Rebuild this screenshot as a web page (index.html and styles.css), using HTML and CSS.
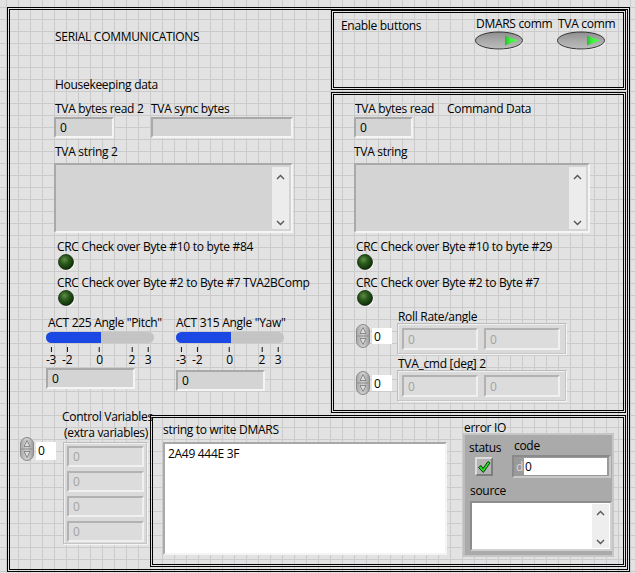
FILE: index.html
```html
<!DOCTYPE html>
<html>
<head>
<meta charset="utf-8">
<title>Serial Communications</title>
<link rel="stylesheet" href="styles.css">
</head>
<body>
<div class="panel">

  <section class="left">
    <div class="lbl title">SERIAL COMMUNICATIONS</div>
    <div class="lbl hk">Housekeeping data</div>
    <div class="row r-bytes">
      <div class="ctl c-bytes">
        <div class="lbl">TVA bytes read 2</div>
        <div class="num w60">0</div>
      </div>
      <div class="ctl">
        <div class="lbl">TVA sync bytes</div>
        <div class="num w142"></div>
      </div>
    </div>
    <div class="lbl gap5">TVA string 2</div>
    <div class="strbox w239">
      <div class="sbar">
        <svg width="9" height="6" viewBox="0 0 9 6"><polyline points="1,5 4.5,1.5 8,5" fill="none" stroke="#555" stroke-width="1.4"/></svg>
        <svg width="9" height="6" viewBox="0 0 9 6"><polyline points="1,1 4.5,4.5 8,1" fill="none" stroke="#555" stroke-width="1.4"/></svg>
      </div>
    </div>
    <div class="lbl crc gap5">CRC Check over Byte #10 to byte #84</div>
    <div class="ledwrap"><svg class="led" width="19" height="18" viewBox="0 0 19 18"><circle cx="10" cy="9" r="7.6" fill="#fff"/><circle cx="9" cy="8" r="7.5" fill="url(#ledg)" stroke="#142a0c" stroke-width="0.8"/></svg></div>
    <div class="lbl crc gap4">CRC Check over Byte #2 to Byte #7 TVA2BComp</div>
    <div class="ledwrap"><svg class="led" width="19" height="18" viewBox="0 0 19 18"><circle cx="10" cy="9" r="7.6" fill="#fff"/><circle cx="9" cy="8" r="7.5" fill="url(#ledg)" stroke="#142a0c" stroke-width="0.8"/></svg></div>

    <div class="row r-sliders">
      <div class="slcol">
        <div class="lbl sllbl">ACT 225 Angle "Pitch"</div>
        <div class="slider"><div class="slfill"></div></div>
        <div class="scale">
          <div class="tick" style="left:0%"><i></i><span>-3</span></div>
          <div class="tick" style="left:16.67%"><i></i><span>-2</span></div>
          <div class="tick" style="left:50%"><i></i><span>0</span></div>
          <div class="tick" style="left:83.33%"><i></i><span>2</span></div>
          <div class="tick" style="left:100%"><i></i><span>3</span></div>
        </div>
        <div class="num w89 slnum">0</div>
      </div>
      <div class="slcol">
        <div class="lbl sllbl yaw">ACT 315 Angle "Yaw"</div>
        <div class="slider"><div class="slfill"></div></div>
        <div class="scale">
          <div class="tick" style="left:0%"><i></i><span>-3</span></div>
          <div class="tick" style="left:16.67%"><i></i><span>-2</span></div>
          <div class="tick" style="left:50%"><i></i><span>0</span></div>
          <div class="tick" style="left:83.33%"><i></i><span>2</span></div>
          <div class="tick" style="left:100%"><i></i><span>3</span></div>
        </div>
        <div class="num w89 slnum yawnum">0</div>
      </div>
    </div>
  </section>

  <section class="box box-enable">
    <div class="lbl en-lbl">Enable buttons</div>
    <div class="btncol">
      <div class="lbl">DMARS comm</div>
      <svg class="okbtn" width="50" height="20" viewBox="0 0 50 20"><ellipse cx="25" cy="10.5" rx="23.5" ry="8.5" fill="#fafafa"/><ellipse cx="24" cy="9.5" rx="23.5" ry="8.5" fill="url(#btng)" stroke="#333"/><polygon points="30,4.5 43,9.5 30,14.5" fill="url(#greeng)"/></svg>
    </div>
    <div class="btncol last">
      <div class="lbl">TVA comm</div>
      <svg class="okbtn" width="50" height="20" viewBox="0 0 50 20"><ellipse cx="25" cy="10.5" rx="23.5" ry="8.5" fill="#fafafa"/><ellipse cx="24" cy="9.5" rx="23.5" ry="8.5" fill="url(#btng)" stroke="#333"/><polygon points="30,4.5 43,9.5 30,14.5" fill="url(#greeng)"/></svg>
    </div>
  </section>

  <section class="box box-cmd">
    <div class="row">
      <div class="ctl c-tva">
        <div class="lbl shift1">TVA bytes read</div>
        <div class="num w59">0</div>
      </div>
      <div class="lbl">Command Data</div>
    </div>
    <div class="lbl gap5">TVA string</div>
    <div class="strbox w236">
      <div class="sbar">
        <svg width="9" height="6" viewBox="0 0 9 6"><polyline points="1,5 4.5,1.5 8,5" fill="none" stroke="#555" stroke-width="1.4"/></svg>
        <svg width="9" height="6" viewBox="0 0 9 6"><polyline points="1,1 4.5,4.5 8,1" fill="none" stroke="#555" stroke-width="1.4"/></svg>
      </div>
    </div>
    <div class="lbl crc gap5">CRC Check over Byte #10 to byte #29</div>
    <div class="ledwrap"><svg class="led" width="19" height="18" viewBox="0 0 19 18"><circle cx="10" cy="9" r="7.6" fill="#fff"/><circle cx="9" cy="8" r="7.5" fill="url(#ledg)" stroke="#142a0c" stroke-width="0.8"/></svg></div>
    <div class="lbl crc gap4">CRC Check over Byte #2 to Byte #7</div>
    <div class="ledwrap"><svg class="led" width="19" height="18" viewBox="0 0 19 18"><circle cx="10" cy="9" r="7.6" fill="#fff"/><circle cx="9" cy="8" r="7.5" fill="url(#ledg)" stroke="#142a0c" stroke-width="0.8"/></svg></div>

    <div class="lbl arrlbl gap2">Roll Rate/angle</div>
    <div class="row arrrow">
      <svg class="spin" width="14" height="24" viewBox="0 0 14 24"><rect x="0.5" y="0.5" width="13" height="23" rx="6.5" fill="url(#spg)" stroke="#8a8a8a"/><line x1="1.5" y1="12" x2="12.5" y2="12" stroke="#8a8a8a"/><polygon points="7,3.5 10,9.5 4,9.5" fill="#dcdcdc" stroke="#777" stroke-width="0.8"/><polygon points="7,20.5 10,14.5 4,14.5" fill="#dcdcdc" stroke="#777" stroke-width="0.8"/></svg>
      <div class="idx">0</div>
      <div class="arr arr-h">
        <div class="cell">0</div>
        <div class="cell">0</div>
      </div>
    </div>
    <div class="lbl arrlbl">TVA_cmd [deg] 2</div>
    <div class="row arrrow">
      <svg class="spin" width="14" height="24" viewBox="0 0 14 24"><rect x="0.5" y="0.5" width="13" height="23" rx="6.5" fill="url(#spg)" stroke="#8a8a8a"/><line x1="1.5" y1="12" x2="12.5" y2="12" stroke="#8a8a8a"/><polygon points="7,3.5 10,9.5 4,9.5" fill="#dcdcdc" stroke="#777" stroke-width="0.8"/><polygon points="7,20.5 10,14.5 4,14.5" fill="#dcdcdc" stroke="#777" stroke-width="0.8"/></svg>
      <div class="idx">0</div>
      <div class="arr arr-h">
        <div class="cell">0</div>
        <div class="cell">0</div>
      </div>
    </div>
  </section>

  <section class="bottom">
    <div class="ctrlvars">
      <div class="cv-lbl">Control Variables<br>(extra variables)</div>
      <div class="row cv-row">
        <svg class="spin" width="14" height="24" viewBox="0 0 14 24"><rect x="0.5" y="0.5" width="13" height="23" rx="6.5" fill="url(#spg)" stroke="#8a8a8a"/><line x1="1.5" y1="12" x2="12.5" y2="12" stroke="#8a8a8a"/><polygon points="7,3.5 10,9.5 4,9.5" fill="#dcdcdc" stroke="#777" stroke-width="0.8"/><polygon points="7,20.5 10,14.5 4,14.5" fill="#dcdcdc" stroke="#777" stroke-width="0.8"/></svg>
        <div class="idx idx-cv">0</div>
        <div class="arr arr-v">
          <div class="cell">0</div>
          <div class="cell">0</div>
          <div class="cell">0</div>
          <div class="cell">0</div>
        </div>
      </div>
    </div>

    <div class="box box-dmars">
      <div class="dm-col">
        <div class="lbl">string to write DMARS</div>
        <div class="whitebox">2A49 444E 3F</div>
      </div>
      <div class="err-col">
        <div class="lbl err-lbl">error IO</div>
        <div class="cluster">
          <div class="row">
            <div class="st-col">
              <div class="lbl">status</div>
              <div class="stbtn"><svg width="14" height="14" viewBox="0 0 14 14"><path d="M1.5 7.5 L4 5.5 L6 8.5 L11 1.5 L13 3 L6.3 12.5 Z" fill="#22e022" stroke="#0b3d0b" stroke-width="1" stroke-linejoin="round"/></svg></div>
            </div>
            <div class="cd-col">
              <div class="lbl cd-lbl">code</div>
              <div class="codefield"><span class="radix">d</span><span class="codeval">0</span></div>
            </div>
          </div>
          <div class="lbl src-lbl">source</div>
          <div class="srcbox">
            <div class="sbar sbar-src">
              <svg width="9" height="6" viewBox="0 0 9 6"><polyline points="1,5 4.5,1.5 8,5" fill="none" stroke="#555" stroke-width="1.4"/></svg>
              <svg width="9" height="6" viewBox="0 0 9 6"><polyline points="1,1 4.5,4.5 8,1" fill="none" stroke="#555" stroke-width="1.4"/></svg>
            </div>
          </div>
        </div>
      </div>
    </div>
  </section>
</div>

<svg class="defs" width="0" height="0" aria-hidden="true">
  <defs>
    <radialGradient id="ledg" cx="40%" cy="35%" r="65%">
      <stop offset="0" stop-color="#5f8d48"/>
      <stop offset="0.45" stop-color="#2b5a1c"/>
      <stop offset="1" stop-color="#0f2e08"/>
    </radialGradient>
    <linearGradient id="btng" x1="0" y1="0" x2="0" y2="1">
      <stop offset="0" stop-color="#8e8e8e"/>
      <stop offset="0.5" stop-color="#a9a9a9"/>
      <stop offset="1" stop-color="#bdbdbd"/>
    </linearGradient>
    <linearGradient id="greeng" x1="0" y1="0" x2="1" y2="0">
      <stop offset="0" stop-color="#2fb82f"/>
      <stop offset="0.4" stop-color="#40f040"/>
      <stop offset="1" stop-color="#52ff52"/>
    </linearGradient>
    <linearGradient id="spg" x1="0" y1="0" x2="1" y2="0">
      <stop offset="0" stop-color="#a8a8a8"/>
      <stop offset="0.5" stop-color="#d2d2d2"/>
      <stop offset="1" stop-color="#9c9c9c"/>
    </linearGradient>
  </defs>
</svg>
</body>
</html>
```

FILE: styles.css
```css
html {
  background-color: #e2e2e2;
  background-image:
    linear-gradient(to right, #cbcbcb 1px, transparent 1px),
    linear-gradient(to bottom, #cbcbcb 1px, transparent 1px);
  background-size: 12px 12px;
  background-position: 6px 7px;
  min-height: 100%;
}
body {
  margin: 0;
  font: 12px/16px "Open Sans", "Noto Sans", sans-serif;
  letter-spacing: -0.3px;
  color: #000;
}
.defs { display: block; width: 0; height: 0; overflow: hidden; }

.panel {
  margin: 7px 0 0 7px;
  width: 623px;
  height: 565px;
  box-sizing: border-box;
  border: 3px double #000;
  display: grid;
  grid-template-columns: 321px 295px;
  grid-template-rows: 80px 321px 152px;
  row-gap: 2px;
}
.box {
  box-sizing: border-box;
  border: 3px double #000;
}
.row { display: flex; align-items: flex-start; }
.lbl { height: 16px; line-height: 18px; white-space: nowrap; }
.gap2 { margin-top: 2px; }
.gap4 { margin-top: 4px; }
.gap5 { margin-top: 5px; }

/* generic indicators */
.num {
  box-sizing: border-box;
  height: 21px;
  margin-top: 1px;
  border: 2px solid;
  border-color: #a9a9a9 #f4f4f4 #f4f4f4 #a9a9a9;
  background: #d4d4d4;
  padding-left: 4px;
  line-height: 18px;
}
.w59 { width: 59px; }
.w60 { width: 60px; margin-left: -1px; }
.w89 { width: 89px; }
.w142 { width: 142px; }

.strbox {
  box-sizing: border-box;
  height: 70px;
  margin-top: 4px;
  border: 2px solid;
  border-color: #a9a9a9 #f4f4f4 #f4f4f4 #a9a9a9;
  background: #d4d4d4;
  display: flex;
  justify-content: flex-end;
  padding: 2px 2px 2px 0;
}
.w239 { width: 239px; margin-left: -1px; }
.w236 { width: 236px; }
.sbar {
  width: 17px;
  background: #ececec;
  display: flex;
  flex-direction: column;
  justify-content: space-between;
  align-items: center;
  padding: 7px 0 3px;
  box-sizing: border-box;
}
.sbar svg { display: block; }

.crc { margin-left: 2px; }
.ledwrap { height: 16px; margin-left: 2px; }
.led { display: block; }

/* left section */
.left { grid-column: 1; grid-row: 1 / 3; padding-left: 45px; }
.title { margin-top: 18px; }
.hk { margin-top: 32px; }
.r-bytes { margin-top: 8px; }
.c-bytes { width: 96px; flex: none; }

.r-sliders { margin-top: 8px; margin-left: -9px; }
.slcol { width: 130px; flex: none; }
.sllbl { margin-left: 2px; }
.sllbl.yaw { margin-left: 0; }
.slider {
  margin-top: 2px;
  width: 108px;
  height: 11px;
  border-radius: 6px;
  background: #c4c4c4;
  overflow: hidden;
}
.slfill { width: 55px; height: 100%; background: #1b47e2; }
.scale {
  position: relative;
  margin: 4px 0 0 5px;
  width: 97px;
  height: 19px;
}
.tick {
  position: absolute;
  top: 0;
  transform: translateX(-50%);
  display: flex;
  flex-direction: column;
  align-items: center;
}
.tick i { display: block; width: 1px; height: 5px; background: #111; }
.tick span { line-height: 15px; }
.slnum { margin-top: 2px; }
.yawnum { margin-top: 4px; }

/* enable box */
.box-enable {
  grid-column: 2;
  grid-row: 1;
  display: flex;
  align-items: flex-start;
  padding: 2px 0 0 7px;
}
.en-lbl { width: 135px; margin-top: 2px; flex: none; }
.btncol { width: 82px; flex: none; }
.btncol.last { width: auto; }
.okbtn { display: block; margin: 0 0 0 -1px; }

/* command box */
.box-cmd {
  grid-column: 2;
  grid-row: 2;
  padding: 5px 0 0 20px;
}
.c-tva { width: 93px; flex: none; }
.shift1 { margin-left: 1px; }
.arrlbl { margin-left: 44px; }
.arrrow { margin-top: -1px; margin-left: 2px; }
.spin { display: block; margin-top: 1px; flex: none; }
.idx {
  box-sizing: border-box;
  width: 20px;
  height: 16px;
  margin: 5px 0 0 2px;
  background: #fff;
  padding-left: 2px;
  line-height: 17px;
  flex: none;
}
.arr {
  box-sizing: border-box;
  background: #dadada;
  border: 1px solid;
  border-color: #bcbcbc #f4f4f4 #f4f4f4 #bcbcbc;
  box-shadow: inset -1px -1px 0 #c6c6c6, inset 1px 1px 0 #efefef;
  flex: none;
}
.arr-h {
  display: flex;
  gap: 6px;
  width: 170px;
  height: 32px;
  margin-left: 5px;
  padding: 4px 6px 0 4px;
}
.cell {
  box-sizing: border-box;
  width: 76px;
  height: 22px;
  border: 2px solid;
  border-color: #b2b2b2 #f0f0f0 #f0f0f0 #b2b2b2;
  background: #dcdcdc;
  color: #a3a3a3;
  padding-left: 4px;
  line-height: 19px;
}

/* bottom */
.bottom { grid-column: 1 / 3; grid-row: 3; display: flex; align-items: flex-start; }
.ctrlvars { width: 140px; margin-top: -7px; flex: none; }
.cv-lbl { margin-left: 52px; width: 88px; padding-top: 1px; text-align: center; white-space: nowrap; }
.cv-row { margin: -4px 0 0 10px; }
.cv-row .spin { margin-top: 0; }
.idx-cv { height: 18px; margin-top: 5px; line-height: 18px; }
.arr-v {
  display: flex;
  flex-direction: column;
  gap: 4px;
  width: 85px;
  height: 103px;
  margin: 5px 0 0 7px;
  padding: 3px 0 0 3px;
}
.arr-v .cell { width: 77px; height: 21px; line-height: 18px; }

.box-dmars {
  width: 476px;
  height: 152px;
  display: flex;
  align-items: flex-start;
  padding: 3px 0 0 10px;
}
.dm-col { width: 300px; flex: none; }
.whitebox {
  box-sizing: border-box;
  width: 284px;
  height: 113px;
  margin-top: 5px;
  border: 2px solid;
  border-color: #a9a9a9 #f4f4f4 #f4f4f4 #a9a9a9;
  background: #fff;
  padding: 2px 0 0 3px;
}
.err-col { margin-top: -2px; }
.err-lbl { margin-left: 1px; }
.cluster {
  box-sizing: border-box;
  width: 151px;
  height: 124px;
  margin-top: -2px;
  background: #aaaaaa;
  border: 2px solid;
  border-color: #c6c6c6 #c6c6c6 #c6c6c6 #bdbdbd;
  padding: 2px 0 0 0;
}
.st-col { width: 47px; padding-left: 4px; padding-top: 2px; box-sizing: border-box; flex: none; }
.stbtn {
  box-sizing: border-box;
  width: 18px;
  height: 19px;
  margin: 2px 0 0 6px;
  background: #b4b4b4;
  border: 2px solid;
  border-color: #dcdcdc #7e7e7e #7e7e7e #dcdcdc;
  display: flex;
  align-items: center;
  justify-content: center;
}
.stbtn svg { display: block; }
.cd-col { flex: none; }
.cd-lbl { margin-left: 2px; }
.codefield {
  box-sizing: border-box;
  display: flex;
  width: 99px;
  height: 23px;
  margin-top: 2px;
  border: 2px solid;
  border-color: #8a8a8a #c8c8c8 #c8c8c8 #8a8a8a;
  background: #9a9a9a;
  padding: 1px 2px 1px 1px;
}
.radix { width: 8px; color: #d6d6d6; line-height: 18px; padding-left: 1px; }
.codeval { flex: 1; background: #fff; line-height: 18px; padding-left: 1px; }
.src-lbl { margin: 4px 0 0 5px; }
.srcbox {
  box-sizing: border-box;
  width: 142px;
  height: 50px;
  margin: 3px 0 0 5px;
  border: 2px solid;
  border-color: #8c8c8c #d0d0d0 #d0d0d0 #8c8c8c;
  background: #fff;
  display: flex;
  justify-content: flex-end;
  padding: 1px 1px 1px 0;
}
.sbar-src { background: #eeeeee; padding: 6px 0 3px; }
```
